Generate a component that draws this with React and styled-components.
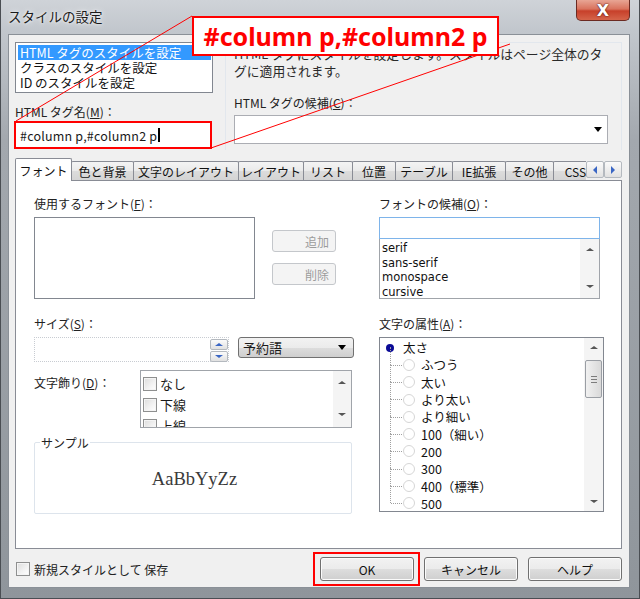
import React from 'react';
import styled, { createGlobalStyle } from 'styled-components';

const GlobalStyle = createGlobalStyle`
  html, body {
    margin: 0;
    padding: 0;
    background: #6f7378;
  }
  body {
    font-family: "Noto Sans CJK JP", "Noto Sans", sans-serif;
    font-size: 12px;
    color: #1a1a1a;
  }
`;

const Window = styled.div`
  position: relative;
  width: 640px;
  height: 599px;
  box-sizing: border-box;
  display: flex;
  flex-direction: column;
  overflow: hidden;
  background: linear-gradient(180deg, #cfd3d8 0px, #c2c7cd 30px, #a3a8ae 140px, #8f959b 100%);
  box-shadow: inset 1px 0 0 #4a4e53, inset -1px 0 0 #4a4e53, inset 0 -1px 0 #4a4e53;
`;

const TitleBar = styled.div`
  height: 34px;
  flex: none;
  display: flex;
  align-items: flex-start;
  justify-content: space-between;
  padding-left: 8px;
`;

const Title = styled.div`
  padding-top: 7px;
  font-size: 13.5px;
  line-height: 18px;
  color: #1b1b1b;
  text-shadow: 0 0 6px #eef0f2, 0 0 3px #ffffff;
`;

const CloseButton = styled.div`
  width: 54px;
  height: 21px;
  margin-right: 10px;
  box-sizing: border-box;
  border: 1px solid #6b2a22;
  border-top: none;
  border-radius: 0 0 5px 5px;
  background: linear-gradient(180deg, #e8a594 0%, #d9735d 45%, #c7402a 55%, #d5644a 100%);
  display: flex;
  align-items: center;
  justify-content: center;
  color: #ffffff;
  font-family: "DejaVu Sans", sans-serif;
  font-weight: bold;
  font-size: 16px;
  text-shadow: 0 0 2px #5a1a10, 0 0 1px #5a1a10;
`;

const Client = styled.div`
  flex: 1;
  margin: 0 10px 11px 8px;
  box-sizing: border-box;
  border: 1px solid #8a9097;
  background: #f0f0f0;
  display: flex;
  flex-direction: column;
`;

const TopSection = styled.div`
  display: flex;
  padding-top: 7px;
  height: 115px;
  box-sizing: border-box;
`;

const LeftTop = styled.div`
  width: 198px;
  margin-left: 6px;
  display: flex;
  flex-direction: column;
`;

const ListBox = styled.div`
  box-sizing: border-box;
  width: ${(p) => p.w}px;
  height: ${(p) => p.h}px;
  border: 1px solid #828790;
  background: #ffffff;
  overflow: hidden;
  position: relative;
`;

const StyleItem = styled.div`
  height: 15px;
  line-height: 15px;
  margin: ${(p) => (p.first ? '2px' : '0')} 1px 0 2px;
  padding-left: 2px;
  font-size: 12.5px;
  white-space: nowrap;
  background: ${(p) => (p.selected ? '#3399ff' : 'transparent')};
  color: ${(p) => (p.selected ? '#ffffff' : '#111111')};
`;

const Label = styled.div`
  height: 15px;
  line-height: 15px;
  font-size: 12px;
  color: #222222;
  white-space: nowrap;
  margin-top: ${(p) => p.mt || 0}px;
  u { text-decoration: underline; }
`;

const TagInput = styled.div`
  margin-top: 2px;
  margin-left: -1px;
  width: 198px;
  height: 28px;
  box-sizing: border-box;
  border: 2px solid #ff0000;
  background: #ffffff;
  padding-left: 4px;
  display: flex;
  align-items: center;
  font-size: 12.5px;
  letter-spacing: 0.2px;
  white-space: nowrap;
`;

const Caret = styled.span`
  display: inline-block;
  width: 2px;
  height: 14px;
  background: #000000;
  margin-left: 1px;
`;

const RightTop = styled.div`
  flex: 1;
  margin: 0 7px 0 12px;
  border: 1px solid #e2e7ed;
  border-bottom: none;
  box-sizing: border-box;
  padding: 2px 13px 0 8px;
  display: flex;
  flex-direction: column;
`;

const Description = styled.div`
  font-size: 12.8px;
  line-height: 17px;
  color: #2a2a2a;
  white-space: nowrap;
`;

const ComboBox = styled.div`
  margin-top: 5px;
  height: 29px;
  box-sizing: border-box;
  border: 1px solid #abadb3;
  background: #ffffff;
  display: flex;
  align-items: center;
  justify-content: flex-end;
  padding-right: 5px;
`;

const DownArrow = styled.span`
  width: 0;
  height: 0;
  border-left: 4px solid transparent;
  border-right: 4px solid transparent;
  border-top: 5px solid #000000;
`;

const TabArea = styled.div`
  margin: 8px 7px 0 6px;
  display: flex;
  flex-direction: column;
`;

const TabStrip = styled.div`
  display: flex;
  height: 23px;
  margin-bottom: -1px;
  position: relative;
  z-index: 1;
`;

const TabsRow = styled.div`
  flex: 1;
  display: flex;
  align-items: flex-end;
  overflow: hidden;
`;

const Tab = styled.div`
  flex: none;
  box-sizing: border-box;
  width: ${(p) => p.w}px;
  height: ${(p) => (p.active ? 23 : 19)}px;
  margin-bottom: ${(p) => (p.active ? 0 : 1)}px;
  margin-left: ${(p) => (p.first ? 0 : -1)}px;
  border: 1px solid #898c95;
  border-bottom: none;
  border-radius: 2px 2px 0 0;
  background: ${(p) =>
    p.active ? '#ffffff' : 'linear-gradient(180deg, #f4f4f4 0%, #eaeaea 50%, #dcdcdc 51%, #d4d4d4 100%)'};
  display: flex;
  align-items: center;
  justify-content: center;
  font-size: 12px;
  color: #111111;
  white-space: nowrap;
  position: relative;
  z-index: ${(p) => (p.active ? 2 : 1)};
`;

const TabScroll = styled.div`
  flex: none;
  display: flex;
  width: 36px;
  height: 17px;
  margin-top: 3px;
`;

const SmallButton = styled.div`
  flex: none;
  box-sizing: border-box;
  width: ${(p) => p.w || 18}px;
  height: ${(p) => p.h || 17}px;
  border: 1px solid #b4b9bf;
  border-radius: 2px;
  background: linear-gradient(180deg, #fbfbfb 0%, #eeeeee 50%, #e1e1e1 100%);
  display: flex;
  align-items: center;
  justify-content: center;
`;

const Tri = styled.span`
  width: 0;
  height: 0;
  ${(p) =>
    p.dir === 'left'
      ? `border-top: 4px solid transparent; border-bottom: 4px solid transparent; border-right: 4px solid ${p.c};`
      : p.dir === 'right'
      ? `border-top: 4px solid transparent; border-bottom: 4px solid transparent; border-left: 4px solid ${p.c};`
      : p.dir === 'up'
      ? `border-left: 4px solid transparent; border-right: 4px solid transparent; border-bottom: 3px solid ${p.c};`
      : `border-left: 4px solid transparent; border-right: 4px solid transparent; border-top: 3px solid ${p.c};`}
`;

const Panel = styled.div`
  height: 369px;
  box-sizing: border-box;
  border: 1px solid #898c95;
  background: #ffffff;
  display: flex;
  padding: 15px 0 0 18px;
`;

const PanelLeft = styled.div`
  width: 345px;
  display: flex;
  flex-direction: column;
`;

const PanelRight = styled.div`
  width: 225px;
  display: flex;
  flex-direction: column;
`;

const FontRow = styled.div`
  margin-top: 6px;
  display: flex;
`;

const ButtonColumn = styled.div`
  margin-left: 17px;
  padding-top: 13px;
  display: flex;
  flex-direction: column;
  gap: 11px;
`;

const DisabledButton = styled.div`
  width: 64px;
  height: 22px;
  box-sizing: border-box;
  border: 1px solid #c4c7cb;
  border-radius: 3px;
  background: #f4f4f4;
  color: #9c9c9c;
  font-size: 12px;
  display: flex;
  align-items: center;
  justify-content: flex-end;
  padding-right: 6px;
`;

const SizeRow = styled.div`
  margin-top: 6px;
  display: flex;
  align-items: flex-start;
`;

const SizeInput = styled.div`
  width: 195px;
  height: 25px;
  box-sizing: border-box;
  border: 1px dotted #c8ccd2;
  display: flex;
  justify-content: flex-end;
`;

const Spin = styled.div`
  display: flex;
  flex-direction: column;
  gap: 1px;
  padding-top: 1px;
`;

const DropButton = styled.div`
  margin-left: 9px;
  width: 116px;
  height: 21px;
  box-sizing: border-box;
  border: 1px solid #707070;
  border-radius: 3px;
  background: linear-gradient(180deg, #f2f2f2 0%, #ebebeb 50%, #dddddd 51%, #cfcfcf 100%);
  display: flex;
  align-items: center;
  justify-content: space-between;
  padding: 0 7px 0 4px;
  font-size: 13px;
`;

const DecoRow = styled.div`
  margin-top: 8px;
  display: flex;
`;

const DecoLabel = styled.div`
  width: 106px;
  padding-top: 5px;
  font-size: 12px;
  line-height: 15px;
  color: #222222;
`;

const CheckList = styled.div`
  width: 212px;
  height: 58px;
  box-sizing: border-box;
  border: 1px solid #a0a4aa;
  background: #ffffff;
  display: flex;
  overflow: hidden;
`;

const CheckItems = styled.div`
  flex: 1;
  padding: 2px 0 0 2px;
`;

const CheckRow = styled.div`
  height: 21px;
  display: flex;
  align-items: center;
  font-size: 13px;
  gap: 3px;
`;

const CheckBox = styled.span`
  flex: none;
  width: 14px;
  height: 14px;
  box-sizing: border-box;
  border: 1px solid #8e8f8f;
  background: linear-gradient(135deg, #dcdcdc 0%, #f3f3f3 60%, #ffffff 100%);
  box-shadow: inset 0 0 0 1px #f4f4f4;
`;

const ScrollBar = styled.div`
  flex: none;
  width: ${(p) => p.w || 18}px;
  background: #f4f4f4;
  display: flex;
  flex-direction: column;
  justify-content: space-between;
  align-items: center;
  padding: ${(p) => p.pad || '6px 0'};
  box-sizing: border-box;
  position: relative;
`;

const ScrollThumb = styled.div`
  position: absolute;
  left: 1px;
  right: 1px;
  top: ${(p) => p.top}px;
  height: ${(p) => p.h}px;
  border: 1px solid #9a9ea4;
  border-radius: 2px;
  box-sizing: border-box;
  background: linear-gradient(90deg, #f1f1f1 0%, #e5e5e5 50%, #d9d9d9 100%);
  display: flex;
  align-items: center;
  justify-content: center;
  &::after {
    content: '';
    width: 6px;
    height: 5px;
    border-top: 1px solid #7c7c7c;
    border-bottom: 1px solid #7c7c7c;
    background: linear-gradient(#7c7c7c, #7c7c7c) center / 100% 1px no-repeat;
  }
`;

const GroupBox = styled.div`
  margin-top: 14px;
  width: 318px;
  height: 72px;
  box-sizing: border-box;
  border: 1px solid #dde4ec;
  border-radius: 2px;
  position: relative;
  display: flex;
  align-items: center;
  justify-content: center;
`;

const Legend = styled.span`
  position: absolute;
  top: -8px;
  left: 5px;
  padding: 0 1px;
  background: #ffffff;
  font-size: 12px;
  line-height: 15px;
  color: #222222;
`;

const SampleText = styled.span`
  font-family: "Liberation Serif", "DejaVu Serif", serif;
  font-size: 18.5px;
  color: #3a3a3a;
  margin-top: 2px;
  margin-left: 3px;
`;

const CandInput = styled.div`
  margin-top: 6px;
  width: 221px;
  height: 22px;
  box-sizing: border-box;
  border: 1px solid #7eb4ea;
  background: #ffffff;
`;

const CandList = styled.div`
  width: 221px;
  height: 60px;
  box-sizing: border-box;
  border: 1px solid #a0a4aa;
  border-top: none;
  background: #ffffff;
  display: flex;
`;

const CandItems = styled.div`
  flex: 1;
  padding: 2px 0 0 2px;
  font-family: "DejaVu Sans", "Noto Sans", sans-serif;
  font-size: 11.5px;
  line-height: 14.6px;
  color: #111111;
`;

const Tree = styled.div`
  margin-top: 6px;
  width: 225px;
  height: 175px;
  box-sizing: border-box;
  border: 1px solid #828790;
  background: #ffffff;
  display: flex;
  overflow: hidden;
`;

const TreeItems = styled.div`
  flex: 1;
  padding-top: 1px;
  position: relative;
`;

const TreeRow = styled.div`
  height: 17.3px;
  display: flex;
  align-items: center;
  font-size: 12.5px;
  color: #111111;
  white-space: nowrap;
  position: relative;
  padding-left: ${(p) => (p.child ? 23 : 6)}px;
  ${(p) =>
    p.child &&
    `
    &::before {
      content: '';
      position: absolute;
      left: 10px;
      top: -9px;
      height: 17.3px;
      border-left: 1px dotted #a0a0a0;
    }
    &::after {
      content: '';
      position: absolute;
      left: 11px;
      top: 8.5px;
      width: 11px;
      border-top: 1px dotted #a0a0a0;
    }
  `}
`;

const BlueDot = styled.span`
  width: 8px;
  height: 8px;
  border-radius: 50%;
  background: #0a0a96;
  margin-right: 9px;
`;

const Radio = styled.span`
  width: 12px;
  height: 12px;
  box-sizing: border-box;
  border-radius: 50%;
  border: 1px solid #d6d6d6;
  background: #ffffff;
  margin-right: 6px;
  flex: none;
`;

const BottomRow = styled.div`
  margin-top: 8px;
  display: flex;
  align-items: center;
  padding: 0 7px 0 7px;
  height: 24px;
`;

const SaveCheck = styled.label`
  display: flex;
  align-items: center;
  gap: 4px;
  font-size: 12px;
  color: #222222;
`;

const Buttons = styled.div`
  margin-left: auto;
  display: flex;
  gap: 10px;
`;

const PushButton = styled.div`
  width: 94px;
  height: 24px;
  box-sizing: border-box;
  border: 1px solid #707070;
  border-radius: 3px;
  background: linear-gradient(180deg, #f2f2f2 0%, #ebebeb 50%, #dddddd 51%, #cfcfcf 100%);
  box-shadow: inset 0 0 0 1px #fbfbfb;
  display: flex;
  align-items: center;
  justify-content: center;
  font-size: 12px;
  color: #111111;
`;

const Highlight = styled.div`
  margin: -5px -6px -5px -7px;
  padding: 3px 4px 3px 5px;
  border: 2px solid #ff0000;
`;

const Annotation = styled.svg`
  position: absolute;
  left: 0;
  top: 0;
  pointer-events: none;
`;

const Callout = styled.div`
  position: absolute;
  left: 192px;
  top: 16px;
  width: 307px;
  height: 40px;
  box-sizing: border-box;
  border: 2px solid #ff0000;
  background: #ffffff;
  display: flex;
  align-items: center;
  justify-content: center;
  font-family: "Noto Sans", "Open Sans", sans-serif;
  font-weight: bold;
  font-size: 25px;
  color: #ff0000;
  white-space: nowrap;
`;

const tabs = [
  { label: 'フォント', w: 57, active: true },
  { label: '色と背景', w: 63 },
  { label: '文字のレイアウト', w: 106 },
  { label: 'レイアウト', w: 66 },
  { label: 'リスト', w: 50 },
  { label: '位置', w: 44 },
  { label: 'テーブル', w: 58 },
  { label: 'IE拡張', w: 54 },
  { label: 'その他', w: 49 },
  { label: 'CSS', w: 45 },
];

const weights = ['ふつう', '太い', 'より太い', 'より細い', '100（細い）', '200', '300', '400（標準）', '500'];

export default function App() {
  return (
    <Window>
      <GlobalStyle />
      <TitleBar>
        <Title>スタイルの設定</Title>
        <CloseButton>X</CloseButton>
      </TitleBar>
      <Client>
        <TopSection>
          <LeftTop>
            <ListBox w={198} h={51}>
              <StyleItem first selected>HTML タグのスタイルを設定</StyleItem>
              <StyleItem>クラスのスタイルを設定</StyleItem>
              <StyleItem>ID のスタイルを設定</StyleItem>
            </ListBox>
            <Label mt={11}>HTML タグ名(<u>M</u>)：</Label>
            <TagInput>
              #column p,#column2 p<Caret />
            </TagInput>
          </LeftTop>
          <RightTop>
            <Description>
              HTML タグにスタイルを設定します。スタイルはページ全体のタ
              <br />
              グに適用されます。
            </Description>
            <Label mt={16}>HTML タグの候補(<u>C</u>)：</Label>
            <ComboBox>
              <DownArrow />
            </ComboBox>
          </RightTop>
        </TopSection>

        <TabArea>
          <TabStrip>
            <TabsRow>
              {tabs.map((t, i) => (
                <Tab key={t.label} w={t.w} active={t.active} first={i === 0}>
                  {t.label}
                </Tab>
              ))}
            </TabsRow>
            <TabScroll>
              <SmallButton>
                <Tri dir="left" c="#3a66c4" />
              </SmallButton>
              <SmallButton>
                <Tri dir="right" c="#3a66c4" />
              </SmallButton>
            </TabScroll>
          </TabStrip>
          <Panel>
            <PanelLeft>
              <Label>使用するフォント(<u>F</u>)：</Label>
              <FontRow>
                <ListBox w={221} h={82} />
                <ButtonColumn>
                  <DisabledButton>追加</DisabledButton>
                  <DisabledButton>削除</DisabledButton>
                </ButtonColumn>
              </FontRow>
              <Label mt={17}>サイズ(<u>S</u>)：</Label>
              <SizeRow>
                <SizeInput>
                  <Spin>
                    <SmallButton w={18} h={11}>
                      <Tri dir="up" c="#3a66c4" />
                    </SmallButton>
                    <SmallButton w={18} h={11}>
                      <Tri dir="down" c="#3a66c4" />
                    </SmallButton>
                  </Spin>
                </SizeInput>
                <DropButton>
                  予約語
                  <DownArrow />
                </DropButton>
              </SizeRow>
              <DecoRow>
                <DecoLabel>文字飾り(<u>D</u>)：</DecoLabel>
                <CheckList>
                  <CheckItems>
                    <CheckRow>
                      <CheckBox />
                      なし
                    </CheckRow>
                    <CheckRow>
                      <CheckBox />
                      下線
                    </CheckRow>
                    <CheckRow>
                      <CheckBox />
                      上線
                    </CheckRow>
                  </CheckItems>
                  <ScrollBar w={18} pad="10px 0 11px">
                    <Tri dir="up" c="#555" />
                    <Tri dir="down" c="#555" />
                  </ScrollBar>
                </CheckList>
              </DecoRow>
              <GroupBox>
                <Legend>サンプル</Legend>
                <SampleText>AaBbYyZz</SampleText>
              </GroupBox>
            </PanelLeft>
            <PanelRight>
              <Label>フォントの候補(<u>O</u>)：</Label>
              <CandInput />
              <CandList>
                <CandItems>
                  <div>serif</div>
                  <div>sans-serif</div>
                  <div>monospace</div>
                  <div>cursive</div>
                </CandItems>
                <ScrollBar w={19} pad="9px 0 10px">
                  <Tri dir="up" c="#555" />
                  <Tri dir="down" c="#555" />
                </ScrollBar>
              </CandList>
              <Label mt={17}>文字の属性(<u>A</u>)：</Label>
              <Tree>
                <TreeItems>
                  <TreeRow>
                    <BlueDot />
                    太さ
                  </TreeRow>
                  {weights.map((w) => (
                    <TreeRow key={w} child>
                      <Radio />
                      {w}
                    </TreeRow>
                  ))}
                </TreeItems>
                <ScrollBar w={19} pad="8px 0 8px">
                  <Tri dir="up" c="#555" />
                  <ScrollThumb top={22} h={38} />
                  <Tri dir="down" c="#555" />
                </ScrollBar>
              </Tree>
            </PanelRight>
          </Panel>
        </TabArea>

        <BottomRow>
          <SaveCheck>
            <CheckBox />
            新規スタイルとして 保存
          </SaveCheck>
          <Buttons>
            <Highlight>
              <PushButton>OK</PushButton>
            </Highlight>
            <PushButton>キャンセル</PushButton>
            <PushButton>ヘルプ</PushButton>
          </Buttons>
        </BottomRow>
      </Client>

      <Annotation width="640" height="599" viewBox="0 0 640 599">
        <line x1="192" y1="16" x2="16" y2="121" stroke="#ff0000" strokeWidth="1" />
        <line x1="510" y1="44" x2="211" y2="148" stroke="#ff0000" strokeWidth="1" />
      </Annotation>
      <Callout>#column p,#column2 p</Callout>
    </Window>
  );
}
